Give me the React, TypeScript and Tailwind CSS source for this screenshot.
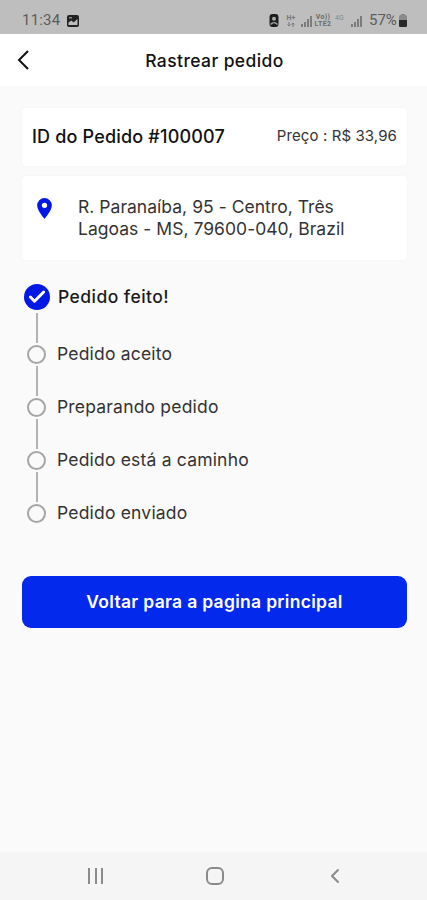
import { Check, ChevronLeft } from 'lucide-react';

const steps = ['Pedido aceito', 'Preparando pedido', 'Pedido está a caminho', 'Pedido enviado'];

const SignalIcon = () => (
  <svg className="h-3 w-3" viewBox="0 0 12 12" fill="#7c7c7c">
    <rect x="0" y="9" width="2" height="3" />
    <rect x="3" y="7" width="2" height="5" />
    <rect x="6" y="4" width="2" height="8" />
    <rect x="9" y="1" width="2" height="11" />
  </svg>
);

const StatusBar = () => (
  <div className="flex h-[34px] items-center justify-between bg-[#bebebe] pt-[7px] pr-[20px] pl-[22px] text-[#5c5c5c]">
    <div className="flex items-center">
      <span className="w-[45px] font-[Roboto] text-[15px] leading-none tracking-[0.2px]">11:34</span>
      <svg className="h-3 w-3" viewBox="0 0 12 12">
        <rect width="12" height="12" rx="2" fill="#222" />
        <path d="M1.5 10V7.5L4.5 5.5L6.5 7.5L10.5 4V10Z" fill="#bebebe" />
        <rect x="2" y="2" width="3" height="1.5" fill="#888" />
      </svg>
    </div>
    <div className="flex items-center">
      <svg className="mr-[7px] h-[13px] w-[10px]" viewBox="0 0 10 13">
        <rect x="0.5" y="0" width="9" height="13" rx="3" fill="#1d1d1d" />
        <circle cx="5" cy="4.8" r="2" fill="#aaa" />
        <path d="M1.5 10.5Q5 6.8 8.5 10.5" stroke="#aaa" strokeWidth="1.2" fill="none" />
      </svg>
      <div className="mr-[5px] flex w-[10px] flex-col items-center">
        <span className="font-[Roboto] text-[7px] leading-[8px] font-bold text-[#777]">H+</span>
        <svg className="h-[5px] w-[8px]" viewBox="0 0 8 5" fill="none" stroke="#777">
          <path d="M2 0V4M0.5 2.5L2 4L3.5 2.5M6 5V1M4.5 2.5L6 1L7.5 2.5" />
        </svg>
      </div>
      <SignalIcon />
      <div className="ml-[1px] flex w-[18px] flex-col items-center font-[Roboto] text-[7px] font-bold text-[#6c6c6c]">
        <span className="h-[7px] leading-[7px] tracking-[0.3px]">Vo))</span>
        <span className="h-[7px] leading-[7px] tracking-[0.4px]">LTE2</span>
      </div>
      <span className="mt-[2px] mr-[5px] ml-[3px] w-[11px] self-start font-[Roboto] text-[7px] leading-[7px] text-[#888]">4G</span>
      <SignalIcon />
      <span className="ml-[6px] w-[30px] font-[Roboto] text-[15px] leading-none">57%</span>
      <svg className="h-[13px] w-[8px]" viewBox="0 0 8 13">
        <rect x="2" y="0" width="4" height="2" fill="#888" />
        <rect x="0" y="1" width="8" height="12" rx="1.5" fill="#8b8b8b" />
        <path d="M0 6H8V11.5Q8 13 6.5 13H1.5Q0 13 0 11.5Z" fill="#2a2a2a" />
      </svg>
    </div>
  </div>
);

const Header = () => (
  <header className="grid h-[52px] grid-cols-[60px_1fr_60px] items-center bg-white">
    <button className="pl-[17px]">
      <svg className="h-5 w-3" viewBox="0 0 12 20" fill="none" stroke="#111" strokeWidth="2">
        <path d="M11 1L2 10L11 19" />
      </svg>
    </button>
    <h1 className="pt-[2px] pl-[2px] text-center text-[17.5px] font-medium tracking-[0.4px] whitespace-nowrap text-[#111]">
      Rastrear pedido
    </h1>
  </header>
);

const OrderCard = () => (
  <section className="flex h-[58px] items-center justify-between rounded-[4px] bg-white px-[10px] pb-[2px] whitespace-nowrap shadow-[0_0_2px_rgba(0,0,0,0.05)]">
    <h2 className="text-[18px] font-medium tracking-[0.18px] text-[#111]">ID do Pedido #100007</h2>
    <span className="text-[15px] tracking-[0.1px] text-[#333]">Preço : R$ 33,96</span>
  </section>
);

const AddressCard = () => (
  <section className="flex h-[84px] rounded-[4px] bg-white pt-[20px] pl-[15px] whitespace-nowrap shadow-[0_0_2px_rgba(0,0,0,0.05)]">
    <svg className="mt-[2px] mr-[26px] h-[21px] w-[15px]" viewBox="0 0 14 20" fill="#0219e6">
      <path d="M7 0a7 7 0 0 0-7 7c0 5.2 7 13 7 13s7-7.8 7-13a7 7 0 0 0-7-7zm0 9.5a2.5 2.5 0 1 1 0-5 2.5 2.5 0 0 1 0 5z" />
    </svg>
    <p className="text-[17.5px] leading-[22px] tracking-[0.03px] text-[#333]">
      R. Paranaíba, 95 - Centro, Três
      <br />
      Lagoas - MS, 79600-040, Brazil
    </p>
  </section>
);

const Timeline = () => (
  <ul className="mt-[24px] ml-[2px] whitespace-nowrap">
    <li className="mb-[3px] flex h-[26px] items-center">
      <span className="mr-[8px] flex size-[26px] items-center justify-center rounded-full bg-[#0219e6]">
        <Check className="size-5 text-white" strokeWidth={3.5} />
      </span>
      <span className="pt-px text-[17.5px] font-medium tracking-[0.45px] text-[#1a1a1a]">Pedido feito!</span>
    </li>
    {steps.map((label) => (
      <li key={label} className="mb-[2px]">
        <div className="mb-[2px] ml-[12px] h-[30px] w-[2px] bg-[#b3b3b3]" />
        <div className="flex h-[19px] items-center">
          <span className="mr-[11px] ml-[3px] size-[19px] rounded-full border-2 border-[#a6a6a6]" />
          <span className="text-[17.5px] tracking-[0.19px] text-[#333]">{label}</span>
        </div>
      </li>
    ))}
  </ul>
);

const BottomNav = () => (
  <nav className="flex h-12 items-center bg-[#f5f5f5] pl-[88px]">
    <div className="mr-[103px] flex gap-[4.5px]">
      <span className="h-4 w-[2px] bg-[#8a8a8a]" />
      <span className="h-4 w-[2px] bg-[#8a8a8a]" />
      <span className="h-4 w-[2px] bg-[#8a8a8a]" />
    </div>
    <span className="mr-[99px] size-[18px] rounded-[6px] border-2 border-[#8a8a8a]" />
    <ChevronLeft className="h-[26px] w-6 text-[#8a8a8a]" />
  </nav>
);

const App = () => (
  <div className="flex h-[900px] w-[427px] flex-col overflow-hidden bg-[#fafafa] font-[Inter,sans-serif]">
    <StatusBar />
    <Header />
    <main className="flex flex-1 flex-col pt-[22px] pr-[20px] pl-[22px]">
      <OrderCard />
      <div className="h-[10px]" />
      <AddressCard />
      <Timeline />
      <button className="mt-[51px] h-[52px] rounded-[9px] bg-[#0229ec] text-[17.5px] font-semibold tracking-[0.3px] whitespace-nowrap text-white">
        Voltar para a pagina principal
      </button>
    </main>
    <BottomNav />
  </div>
);

export default App;
